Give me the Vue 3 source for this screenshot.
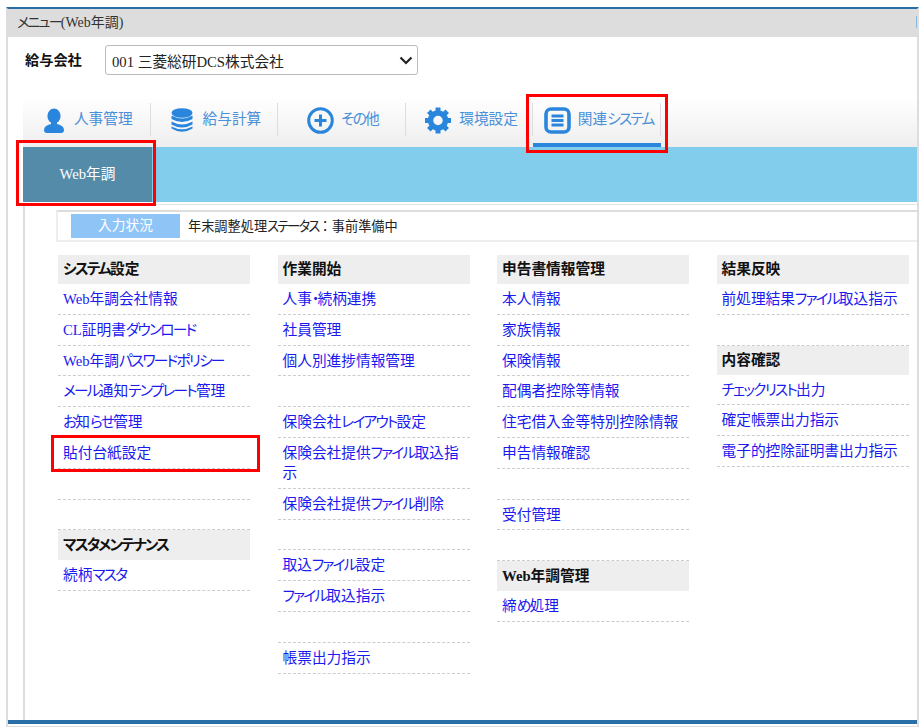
<script setup>
import { h } from 'vue';

// kana sits tighter than kanji in the original font, so split it into its own spans
const Jp = (props) =>
  props.text
    .split(/([\u3040-\u30ff]+)/)
    .filter(Boolean)
    .map(part => (/^[\u3040-\u30ff]/.test(part) ? h('span', { class: 'kana' }, part) : part));
Jp.props = ['text'];

const tabs = [
  { label: '人事管理', icon: 'person' },
  { label: '給与計算', icon: 'db' },
  { label: 'その他', icon: 'plus' },
  { label: '環境設定', icon: 'gear' },
  { label: '関連システム', icon: 'list', active: true }
];

const columns = [
  [
    { title: 'システム設定' },
    { link: 'Web年調会社情報' },
    { link: 'CL証明書ダウンロード' },
    { link: 'Web年調パスワードポリシー' },
    { link: 'メール通知テンプレート管理' },
    { link: 'お知らせ管理' },
    { link: '貼付台紙設定' },
    { link: '' },
    { link: '' },
    { title: 'マスタメンテナンス', tall: true },
    { link: '続柄マスタ' }
  ],
  [
    { title: '作業開始' },
    { link: '人事・続柄連携' },
    { link: '社員管理' },
    { link: '個人別進捗情報管理' },
    { link: '' },
    { link: '保険会社レイアウト設定' },
    { link: '保険会社提供ファイル取込指示' },
    { link: '保険会社提供ファイル削除' },
    { link: '' },
    { link: '取込ファイル設定' },
    { link: 'ファイル取込指示' },
    { link: '' },
    { link: '帳票出力指示' }
  ],
  [
    { title: '申告書情報管理' },
    { link: '本人情報' },
    { link: '家族情報' },
    { link: '保険情報' },
    { link: '配偶者控除等情報' },
    { link: '住宅借入金等特別控除情報' },
    { link: '申告情報確認' },
    { link: '' },
    { link: '受付管理' },
    { link: '' },
    { title: 'Web年調管理', tall: true },
    { link: '締め処理' }
  ],
  [
    { title: '結果反映' },
    { link: '前処理結果ファイル取込指示' },
    { link: '' },
    { title: '内容確認' },
    { link: 'チェックリスト出力' },
    { link: '確定帳票出力指示' },
    { link: '電子的控除証明書出力指示' }
  ]
];
</script>

<template>
  <div class="window">
    <div class="title-bar"><Jp text="メニュー(Web年調)" /></div>

    <div class="company-row">
      <label class="company-label">給与会社</label>
      <div class="company-select">
        <span>001 三菱総研DCS株式会社</span>
        <svg class="chevron" viewBox="0 0 14 9" width="14" height="9">
          <path d="M1.5 1.5 L7 7 L12.5 1.5" fill="none" stroke="#222" stroke-width="2.2" />
        </svg>
      </div>
    </div>

    <div class="body">
      <div class="tab-bar">
        <div v-for="tab in tabs" :key="tab.label" class="tab" :class="{ active: tab.active }">
          <svg v-if="tab.icon === 'person'" class="icon" viewBox="0 0 20 25" width="20" height="25">
            <ellipse cx="10" cy="8" rx="6.6" ry="7.6" fill="#2a86dc" />
            <path d="M7 14 L13 14 L13 16 Q20 17.5 20 22 Q20 25 17 25 L3 25 Q0 25 0 22 Q0 17.5 7 16 Z" fill="#2a86dc" />
          </svg>
          <svg v-else-if="tab.icon === 'db'" class="icon" viewBox="0 0 22 25" width="22" height="25">
            <ellipse cx="11" cy="5" rx="10.5" ry="4.8" fill="#2a86dc" />
            <path d="M0.5 7.5 Q11 13.5 21.5 7.5 L21.5 11 Q11 17 0.5 11 Z" fill="#2a86dc" />
            <path d="M0.5 13.5 Q11 19.5 21.5 13.5 L21.5 16.5 Q11 22.5 0.5 16.5 Z" fill="#2a86dc" />
            <path d="M0.5 18.5 Q11 24 21.5 18.5 L21.5 20.5 Q11 27 0.5 20.5 Z" fill="#2a86dc" />
          </svg>
          <svg v-else-if="tab.icon === 'plus'" class="icon" viewBox="0 0 27 27" width="27" height="27">
            <circle cx="13.5" cy="13.5" r="11.8" fill="none" stroke="#2a86dc" stroke-width="3" />
            <path d="M13.5 7.5 V19.5 M7.5 13.5 H19.5" stroke="#2a86dc" stroke-width="3" />
          </svg>
          <svg v-else-if="tab.icon === 'gear'" class="icon" viewBox="0 0 28 27" width="28" height="27">
            <circle cx="14" cy="13.5" r="7.5" fill="none" stroke="#2a86dc" stroke-width="5.5" />
            <g stroke="#2a86dc" stroke-width="5">
              <path d="M14 0.5 V5" />
              <path d="M14 22 V26.5" />
              <path d="M1 13.5 H5.5" />
              <path d="M22.5 13.5 H27" />
              <path d="M4.8 4.3 L8 7.5" />
              <path d="M20 19.5 L23.2 22.7" />
              <path d="M23.2 4.3 L20 7.5" />
              <path d="M8 19.5 L4.8 22.7" />
            </g>
          </svg>
          <svg v-else class="icon" viewBox="0 0 27 27" width="27" height="27">
            <rect x="2" y="2" width="23" height="23" rx="5" fill="none" stroke="#2a86dc" stroke-width="3.6" />
            <path d="M7.5 9 H19.5 M7.5 13.5 H19.5 M7.5 18 H19.5" stroke="#2a86dc" stroke-width="2.8" />
          </svg>
          <span class="tab-label"><Jp :text="tab.label" /></span>
        </div>
      </div>

      <div class="sub-bar">
        <div class="sub-tab">Web年調</div>
      </div>

      <div class="content">
        <div class="status-box">
          <div class="status-label">入力状況</div>
          <div class="status-text">年末調整処理<Jp text="ステータス" /><span class="colon">：</span>事前準備中</div>
        </div>

        <div class="menu-grid">
          <div v-for="(col, i) in columns" :key="i" class="menu-col">
            <template v-for="(item, j) in col" :key="j">
              <div v-if="item.title" class="menu-title" :class="{ tall: item.tall }"><Jp :text="item.title" /></div>
              <div v-else class="menu-item">
                <a v-if="item.link" href="#" @click.prevent><Jp :text="item.link" /></a>
              </div>
            </template>
          </div>
        </div>
      </div>
    </div>

    <div class="bottom-line"></div>

    <div class="mark mark-tab"></div>
    <div class="mark mark-system"></div>
    <div class="mark mark-item"></div>
  </div>
</template>

<style>
html, body {
  margin: 0;
  background: #fff;
}

.kana {
  letter-spacing: -1.75px;
}
</style>

<style scoped>
.window {
  position: relative;
  box-sizing: border-box;
  width: 913px;
  height: 720px;
  margin: 7px 0 0 6px;
  border-left: 2px solid #ddd;
  border-right: 2px solid #ddd;
  border-top: 2px solid #2a6ea8;
  border-bottom: 1px solid #ddd;
  padding-bottom: 2px;
  font-family: "Liberation Serif", "Noto Sans CJK JP", serif;
  font-size: 14.7px;
  font-feature-settings: "palt";
  color: #222;
  display: flex;
  flex-direction: column;
}

.title-bar {
  position: relative;
  height: 28px;
  line-height: 27px;
  background: #ddd;
  padding-left: 9px;
  font-size: 14px;
  color: #333;
}

.title-bar::after {
  content: "";
  position: absolute;
  right: 0;
  top: 7px;
  width: 1px;
  height: 12px;
  background: #8db8dc;
}

.company-row {
  display: flex;
  align-items: center;
  height: 30px;
  margin-top: 8px;
  padding-left: 17px;
}

.company-label {
  width: 80px;
  font-weight: bold;
  font-size: 14.2px;
  color: #111;
  position: relative;
  top: -1px;
}

.company-select {
  box-sizing: border-box;
  width: 313px;
  height: 30px;
  border: 1px solid #bbb;
  border-radius: 3px;
  display: flex;
  align-items: center;
  justify-content: space-between;
  padding: 0 4px 0 6px;
  color: #222;
}

.body {
  flex: 1;
  margin: 22px 0 0 15px;
  display: flex;
  flex-direction: column;
  min-height: 0;
}

.tab-bar {
  display: flex;
  height: 50px;
  flex: none;
  background: linear-gradient(#fff, #eee);
}

.tab {
  position: relative;
  box-sizing: border-box;
  width: 127.6px;
  display: flex;
  align-items: center;
  justify-content: center;
  gap: 10px;
  padding: 0 0 3px 3px;
}

.tab:nth-child(n+3) {
  gap: 7px;
}

.tab::after {
  content: "";
  position: absolute;
  right: 0;
  top: 6px;
  height: 33px;
  width: 1px;
  background: #ddd;
}

.tab.active {
  border-bottom: 4px solid #2a86dc;
  padding-bottom: 0;
}

.tab-label {
  color: #4a90d9;
  position: relative;
  top: -3px;
}

.icon {
  flex: none;
}

.sub-bar {
  height: 55px;
  background: #82cdec;
  flex: none;
}

.sub-tab {
  width: 129px;
  height: 100%;
  background: #548ba8;
  color: #fff;
  display: flex;
  align-items: center;
  justify-content: center;
  padding-bottom: 4px;
  box-sizing: border-box;
}

.content {
  flex: 1;
  min-height: 0;
  box-sizing: border-box;
  margin-top: 2px;
  border-left: 2px solid #ddd;
  border-top: 1px solid #e4e4e4;
  padding: 5px 0 0 31px;
}

.status-box {
  box-sizing: border-box;
  height: 32px;
  border: 2px solid #eee;
  border-top-color: #ddd;
  border-right: none;
  display: flex;
  align-items: center;
  padding-left: 13px;
}

.status-label {
  width: 109px;
  height: 24px;
  line-height: 23px;
  text-align: center;
  background: #8fc4f7;
  color: #fff;
  font-size: 13.7px;
}

.status-text {
  margin: 0 0 2px 8px;
  font-size: 13.2px;
}

.colon {
  font-feature-settings: normal;
}

.menu-grid {
  display: grid;
  grid-template-columns: repeat(4, 192px);
  column-gap: 27.5px;
  margin: 13px 0 0 2px;
}

.menu-title {
  height: 29px;
  line-height: 29px;
  background: #eee;
  padding-left: 5px;
  font-weight: bold;
  color: #111;
}

.menu-title.tall {
  height: 30px;
  line-height: 31px;
}

.menu-item {
  box-sizing: border-box;
  min-height: 30.8px;
  padding: 5px 0 4.8px 5px;
  line-height: 20px;
  border-bottom: 1px dashed #ccc;
}

.menu-item a {
  color: #1a1aee;
  text-decoration: none;
}

.bottom-line {
  height: 4px;
  background: #2a6ea8;
  flex: none;
}

.mark {
  position: absolute;
  box-sizing: border-box;
  border: 3px solid #f00;
  pointer-events: none;
}

.mark-tab {
  left: 8px;
  top: 131px;
  width: 140px;
  height: 66px;
}

.mark-system {
  left: 518px;
  top: 85px;
  width: 142px;
  height: 59px;
}

.mark-item {
  left: 43px;
  top: 426px;
  width: 209px;
  height: 37px;
}
</style>
